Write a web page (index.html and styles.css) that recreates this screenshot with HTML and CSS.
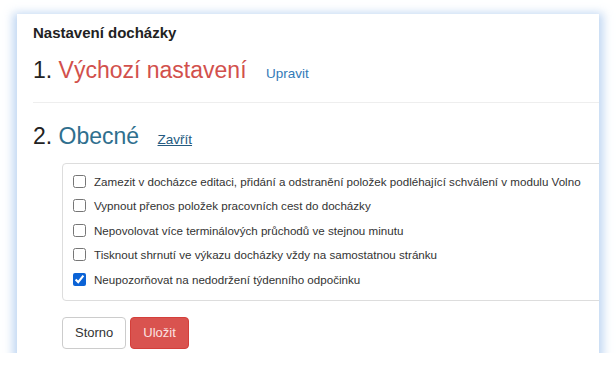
FILE: index.html
```html
<!DOCTYPE html>
<html lang="cs">
<head>
<meta charset="utf-8">
<title>Nastavení docházky</title>
<link rel="stylesheet" href="styles.css">
</head>
<body>
<div class="card">
  <h1 class="title">Nastavení docházky</h1>
  <div class="section-head first">
    <span class="num">1.</span> <span class="name red">Výchozí nastavení</span>
    <a class="link" href="#">Upravit</a>
  </div>
  <div class="divider"></div>
  <div class="section-head second">
    <span class="num">2.</span> <span class="name teal">Obecné</span>
    <a class="link under" href="#">Zavřít</a>
  </div>
  <div class="panel">
    <label class="row"><input type="checkbox"><span>Zamezit v docházce editaci, přidání a odstranění položek podléhající schválení v modulu Volno</span></label>
    <label class="row"><input type="checkbox"><span>Vypnout přenos položek pracovních cest do docházky</span></label>
    <label class="row"><input type="checkbox"><span>Nepovolovat více terminálových průchodů ve stejnou minutu</span></label>
    <label class="row"><input type="checkbox"><span>Tisknout shrnutí ve výkazu docházky vždy na samostatnou stránku</span></label>
    <label class="row"><input type="checkbox" checked><span>Neupozorňovat na nedodržení týdenního odpočinku</span></label>
  </div>
  <div class="actions">
    <button class="btn btn-default">Storno</button>
    <button class="btn btn-danger">Uložit</button>
  </div>
</div>
</body>
</html>
```

FILE: styles.css
```css
* { box-sizing: border-box; }
html, body {
  margin: 0;
  padding: 0;
  background: #ffffff;
  font-family: "Liberation Sans", Arial, sans-serif;
  color: #333333;
}
body { padding: 14px 0 0 17px; }
.card {
  width: 582px;
  height: 339px;
  background: #ffffff;
  overflow: hidden;
  padding: 8px 0 0 16px;
  box-shadow: 0 3px 9px 4px rgba(170, 200, 238, 0.75);
}
.title {
  margin: 0;
  font-size: 15px;
  font-weight: 700;
  line-height: 22px;
  color: #222222;
}
.section-head {
  font-size: 23px;
  line-height: 33px;
  white-space: nowrap;
  color: #222222;
}
.section-head.first { margin-top: 9.5px; }
.section-head.second { margin-top: 16.5px; }
.name.red { color: #d2504c; }
.name.teal { color: #2f6f8e; }
.link {
  font-size: 13.5px;
  color: #337ab7;
  text-decoration: none;
  margin-left: 13px;
}
.link.under {
  color: #245a80;
  text-decoration: underline;
  margin-left: 12px;
}
.divider {
  margin-top: 12.5px;
  height: 1px;
  background: #eeeeee;
}
.panel {
  margin: 7.5px -20px 0 29px;
  border: 1px solid #dddddd;
  border-radius: 4px;
  padding: 5px 10px 8.5px 10px;
}
.row {
  display: flex;
  align-items: center;
  gap: 8px;
  height: 24.5px;
  font-size: 11.6px;
  color: #333333;
  white-space: nowrap;
}
.row input {
  margin: 0;
  width: 13px;
  height: 13px;
  accent-color: #0b63d6;
}
.actions {
  display: flex;
  gap: 4px;
  margin: 15.5px 0 0 29px;
}
.btn {
  font-family: "Liberation Sans", Arial, sans-serif;
  font-size: 13px;
  height: 32px;
  padding: 0 12px;
  border-radius: 4px;
  border: 1px solid #cccccc;
  cursor: pointer;
}
.btn-default { background: #ffffff; color: #333333; }
.btn-danger { background: #d9534f; border-color: #d43f3a; color: #fbe3e2; }
```
